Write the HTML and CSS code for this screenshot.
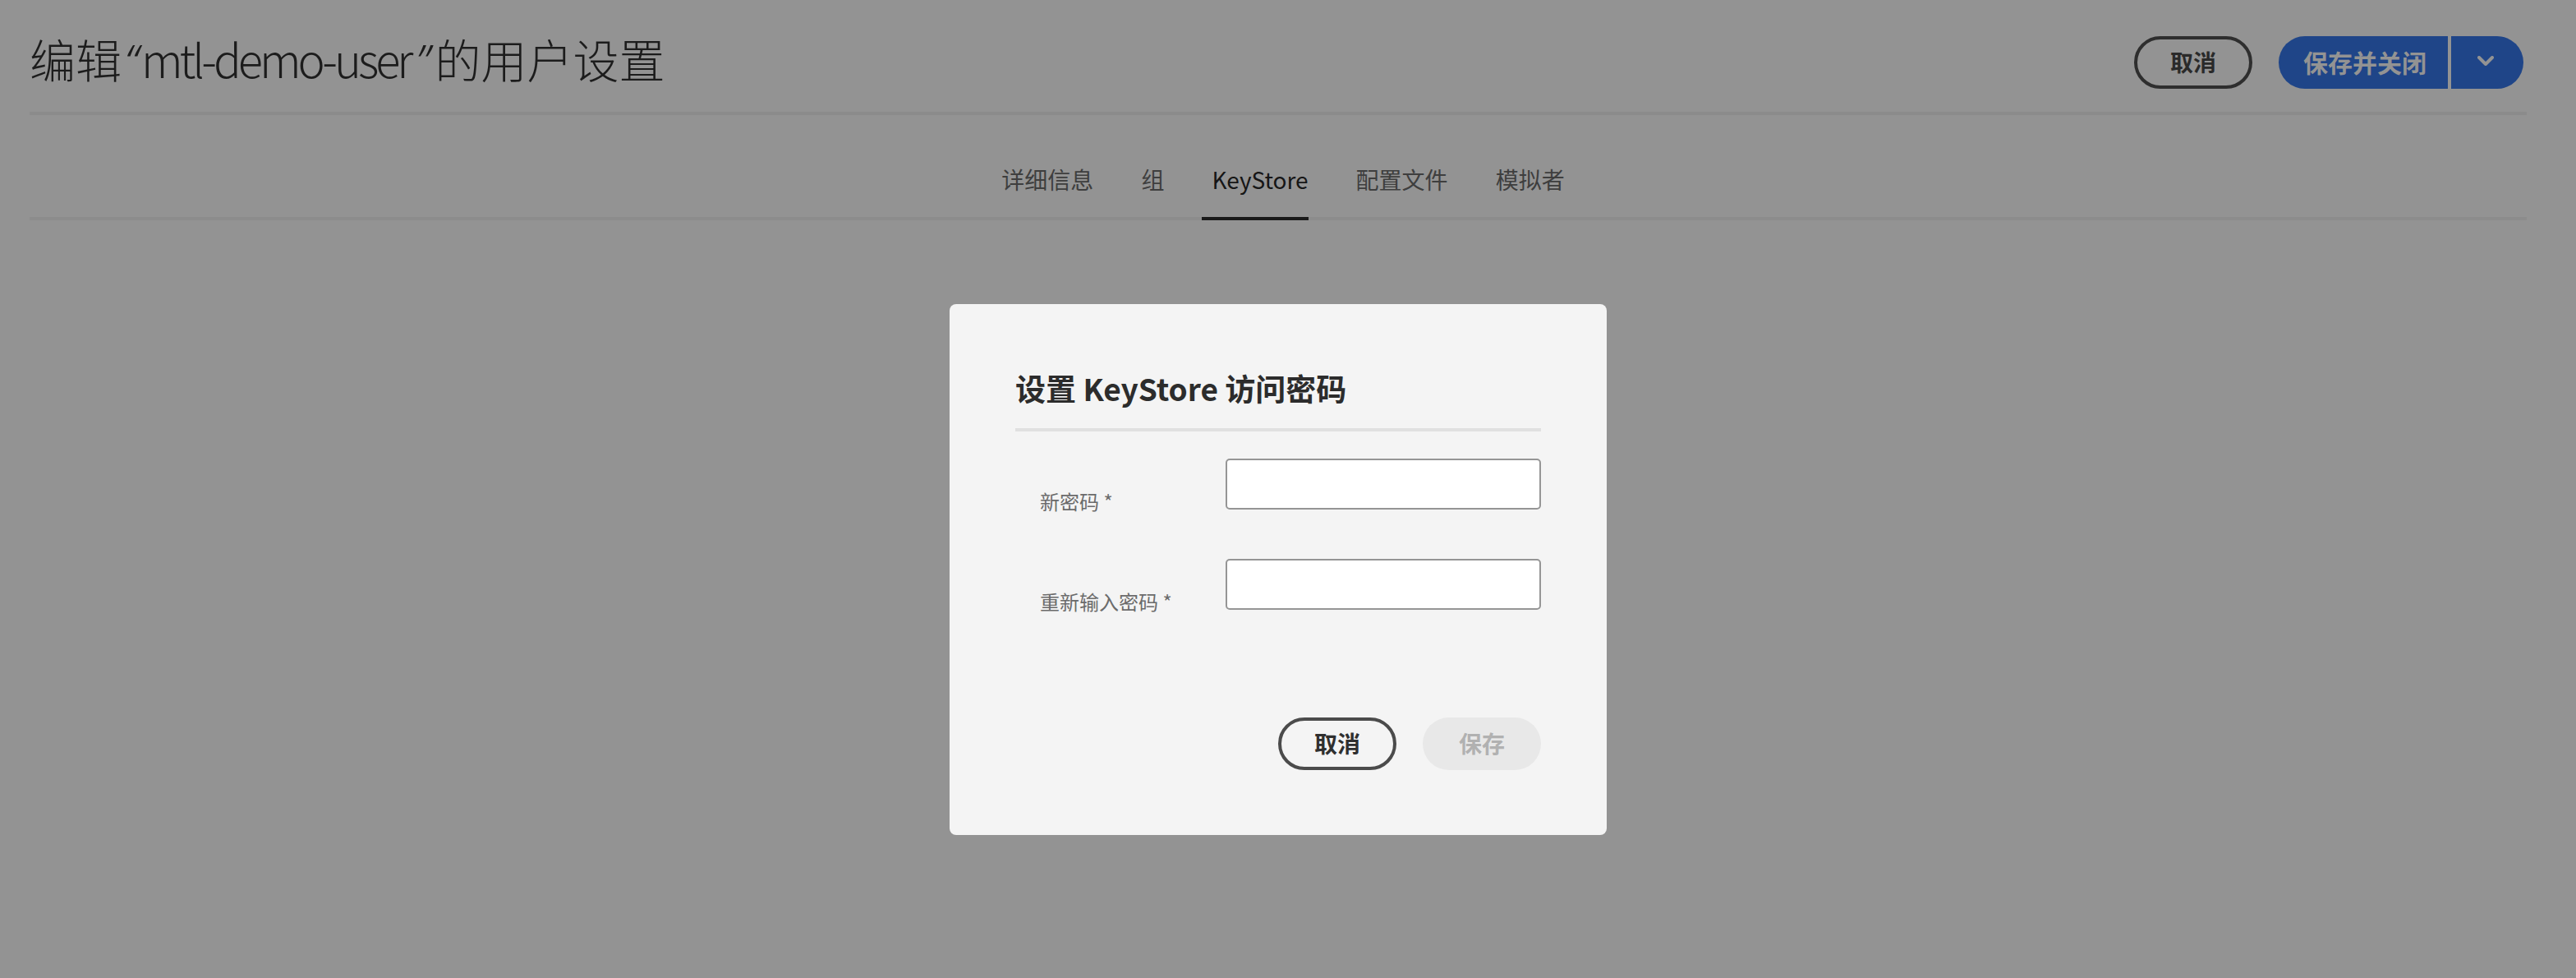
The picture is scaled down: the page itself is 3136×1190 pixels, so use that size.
FILE: index.html
```html
<!DOCTYPE html>
<html lang="zh-CN">
<head>
<meta charset="utf-8">
<title>编辑用户设置</title>
<link rel="stylesheet" href="styles.css">
</head>
<body>
<div class="page">
  <header class="header">
    <h1 class="title">编辑<span class="q q-open">“</span><span class="latin">mtl-demo-user</span><span class="q q-close">”</span>的用户设置</h1>
    <div class="actions">
      <button class="btn btn-outline">取消</button>
      <div class="split">
        <button class="split-main">保存并关闭</button>
        <button class="split-toggle" aria-label="更多">
          <svg width="20" height="12" viewBox="0 0 20 12"><polyline points="2,2 10,10 18,2" fill="none" stroke="#939393" stroke-width="4" stroke-linecap="round" stroke-linejoin="round"/></svg>
        </button>
      </div>
    </div>
  </header>
  <div class="divider"></div>
  <nav class="tabs">
    <div class="tab">详细信息</div>
    <div class="tab">组</div>
    <div class="tab active">KeyStore</div>
    <div class="tab">配置文件</div>
    <div class="tab">模拟者</div>
  </nav>
</div>

<div class="dialog">
  <h2 class="dialog-title">设置 KeyStore 访问密码</h2>
  <div class="dialog-divider"></div>
  <form class="form">
    <div class="row">
      <label class="label">新密码 *</label>
      <input class="field" type="password">
    </div>
    <div class="row">
      <label class="label">重新输入密码 *</label>
      <input class="field" type="password">
    </div>
  </form>
  <div class="dialog-buttons">
    <button class="btn btn-outline btn-dialog">取消</button>
    <button class="btn btn-disabled">保存</button>
  </div>
</div>
</body>
</html>
```
FILE: styles.css
```css
* { box-sizing: border-box; }
html, body {
  margin: 0;
  padding: 0;
}
body {
  width: 3136px;
  height: 1190px;
  overflow: hidden;
  background: #939393;
  font-family: "Noto Sans CJK SC", "Noto Sans", sans-serif;
  color: #1e1e1e;
  position: relative;
}
.page {
  padding: 0 60px 0 36px;
}
.header {
  display: flex;
  align-items: center;
  justify-content: space-between;
  height: 136px;
  padding-top: 16px;
  padding-right: 4px;
}
.title {
  margin: 0 0 8px;
  font-size: 56px;
  font-weight: 300;
  line-height: 72px;
  color: #1c1c1c;
  white-space: nowrap;
}
.latin {
  letter-spacing: -4px;
}
.q {
  display: inline-block;
  font-family: "Noto Sans", sans-serif;
  font-weight: 300;
  font-style: italic;
  text-align: center;
}
.q-open { width: 24px; }
.q-close { width: 30px; }
.actions {
  display: flex;
  align-items: center;
  gap: 32px;
}
.btn {
  font-family: "Noto Sans CJK SC", sans-serif;
  font-size: 28px;
  font-weight: 700;
  height: 64px;
  width: 144px;
  border-radius: 32px;
  display: flex;
  align-items: center;
  justify-content: center;
  padding: 0 0 2px;
  cursor: pointer;
}
.btn-outline {
  background: transparent;
  border: 4px solid #2e2e2e;
  color: #2a2a2a;
}
.split {
  display: flex;
  gap: 4px;
}
.split-main, .split-toggle {
  height: 64px;
  border: none;
  background: #1f4588;
  color: #939393;
  font-family: "Noto Sans CJK SC", sans-serif;
  font-size: 30px;
  font-weight: 700;
  display: flex;
  align-items: center;
  justify-content: center;
  padding: 0 0 2px;
}
.split-main {
  width: 206px;
  border-radius: 32px 0 0 32px;
  padding-left: 4px;
}
.split-toggle {
  width: 88px;
  border-radius: 0 32px 32px 0;
  padding-right: 4px;
  padding-bottom: 4px;
}
.divider {
  height: 4px;
  background: #8b8b8b;
}
.tabs {
  display: flex;
  justify-content: center;
  gap: 58px;
  border-bottom: 4px solid #8c8c8c;
  padding-left: 12px;
}
.tab {
  font-size: 28px;
  line-height: 40px;
  padding: 58px 0 26px;
  color: #3e3e3e;
}
.tab.active {
  color: #161616;
  border-bottom: 4px solid #1a1a1a;
  margin-bottom: -4px;
  margin-left: -12px;
  padding-left: 12px;
}

.dialog {
  position: absolute;
  left: 1156px;
  top: 370px;
  width: 800px;
  height: 646px;
  background: #f4f4f4;
  border-radius: 8px;
  padding: 79px 80px 79px;
}
.dialog-title {
  margin: 0;
  font-size: 37px;
  font-weight: 700;
  line-height: 47px;
  color: #2c2c2c;
}
.dialog-divider {
  margin-top: 25px;
  height: 4px;
  background: #e0e0e0;
}
.form {
  margin: 33px 0 0;
  display: flex;
  flex-direction: column;
  gap: 60px;
}
.row {
  display: flex;
  align-items: flex-start;
  height: 62px;
}
.label {
  width: 256px;
  height: 62px;
  padding: 42px 0 0 30px;
  font-size: 24px;
  line-height: 20px;
  color: #6b6b6b;
  white-space: nowrap;
}
.field {
  width: 384px;
  height: 62px;
  border: 2px solid #959595;
  border-radius: 5px;
  background: #ffffff;
  margin: 0;
  padding: 0 12px;
}
.dialog-buttons {
  margin-top: 131px;
  display: flex;
  justify-content: flex-end;
  gap: 32px;
}
.btn-dialog {
  border-color: #4b4b4b;
  color: #2f2f2f;
}
.btn-disabled {
  background: #e8e8e8;
  border: none;
  color: #b1b1b1;
}
```
